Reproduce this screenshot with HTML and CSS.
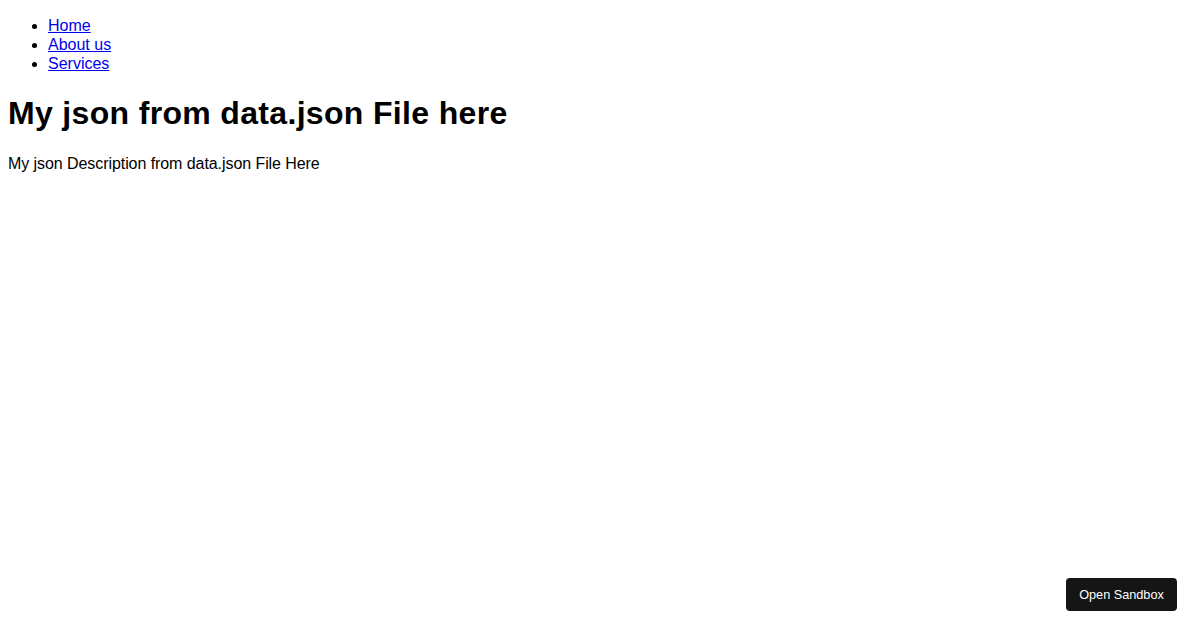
FILE: index.html
```html
<!DOCTYPE html>
<html>
<head>
<meta charset="utf-8">
<link rel="stylesheet" href="styles.css">
</head>
<body>
<ul class="nav">
  <li><a href="#">Home</a></li>
  <li><a href="#">About us</a></li>
  <li><a href="#">Services</a></li>
</ul>
<h1 class="title">My json from data.json File here</h1>
<p class="desc">My json Description from data.json File Here</p>
<a class="sandbox" href="#">Open Sandbox</a>
</body>
</html>
```
FILE: styles.css
```css
body {
  margin: 0;
  padding: 0 8px;
  font-family: "Liberation Sans", Arial, sans-serif;
  color: #000;
  background: #fff;
}
.nav {
  margin: 16px 0;
  padding-left: 40px;
  line-height: 19px;
}
.nav a { color: #0000ee; }
.title {
  font-size: 32px;
  margin: 22px 0;
  line-height: 37px;
  letter-spacing: 0.33px;
}
.desc {
  margin: 16px 0;
  line-height: 19px;
  letter-spacing: -0.07px;
}
.sandbox {
  position: fixed;
  right: 23px;
  bottom: 19px;
  width: 111px;
  height: 33px;
  box-sizing: border-box;
  display: flex;
  align-items: center;
  justify-content: center;
  background: #151515;
  color: #fff;
  font-size: 12.7px;
  border-radius: 4px;
  text-decoration: none;
  font-family: "Liberation Sans", Arial, sans-serif;
}
```
